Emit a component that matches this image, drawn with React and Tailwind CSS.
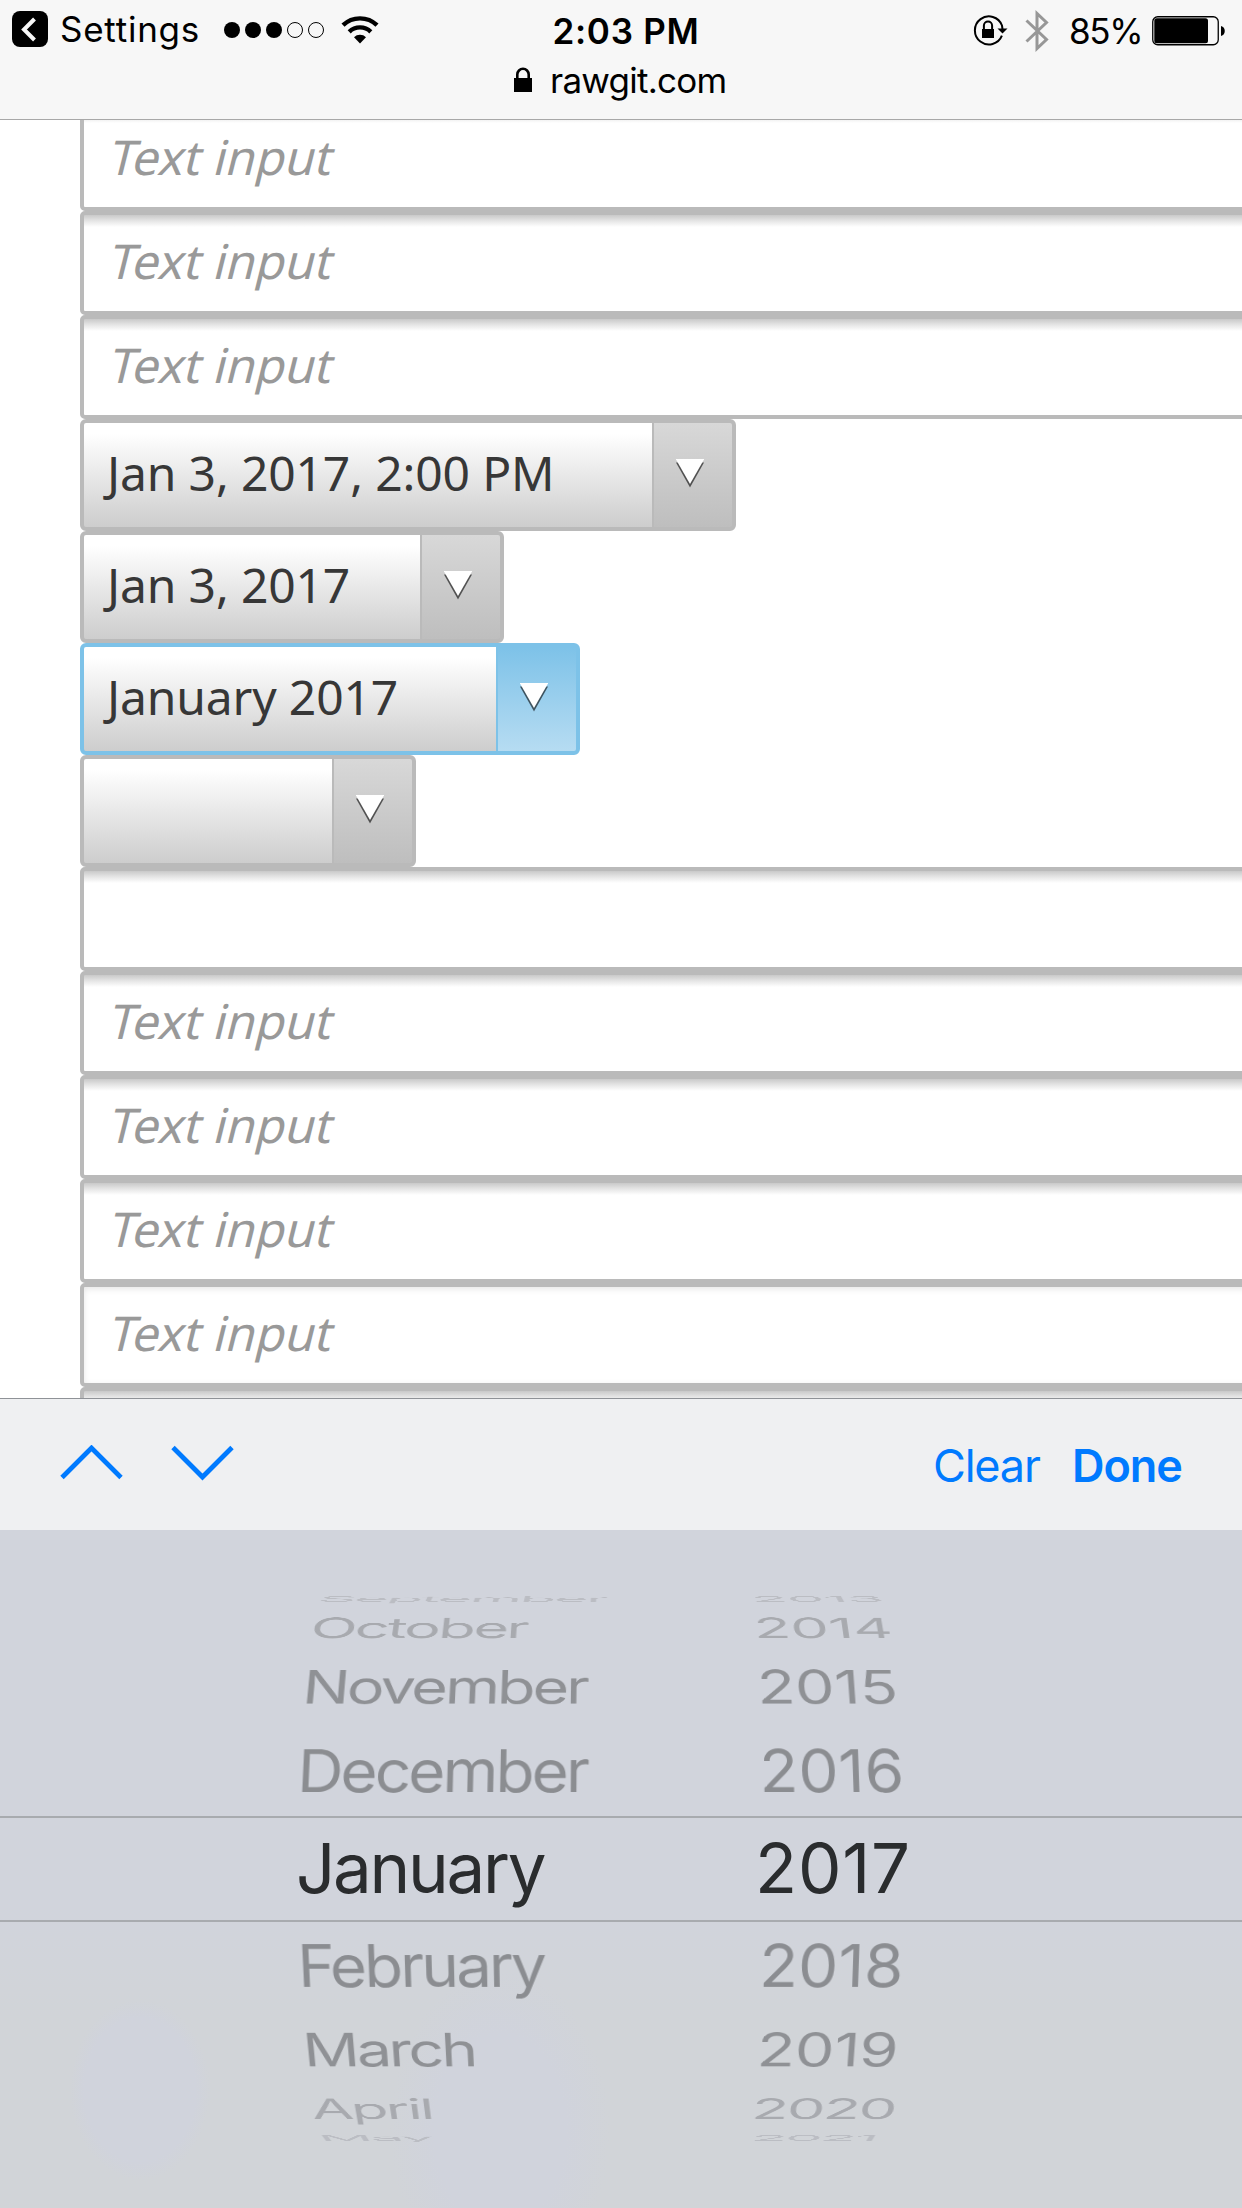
function TextInput({ placeholder, soft }) {
  return (
    <div
      className={
        "flex h-[104px] w-[1200px] shrink-0 items-center rounded-[5px] border-4 border-[#bababa] pl-6 font-['Noto_Sans','Open_Sans',sans-serif] text-[48px] leading-[64px] text-[#999] " +
        (soft
          ? "bg-white shadow-[inset_0_2px_6px_rgba(0,0,0,0.1)]"
          : "bg-[linear-gradient(to_bottom,#c9c9c9,#e6e6e6_6px,#fff_12px)]")
      }
    >
      <span className="-ml-[1px] -mt-[4px] inline-block origin-[0_49px] -skew-x-[14deg]">{placeholder}</span>
    </div>
  );
}

function Select({ label, width, active }) {
  return (
    <div
      className={
        "flex h-28 shrink-0 overflow-hidden rounded-[6px] border-4 " +
        width +
        (active ? " border-[#7dc2e8] bg-[#7dc2e8]" : " border-[#bababa] bg-[#bababa]")
      }
    >
      <div className="flex flex-1 items-center bg-linear-to-b from-white from-10% to-[#cdcdcd] pl-[23px] font-['Noto_Sans','Open_Sans',sans-serif] text-[48px] leading-[64px] tracking-[-0.15px] whitespace-nowrap text-[#373737]">
        <span className="-mt-[5px]">{label}</span>
      </div>
      <div
        className={
          "flex w-20 border-l-2 pt-9 pl-[22px] " +
          (active
            ? "border-[#7dc2e8] bg-linear-to-b from-[#7dc2e8] to-[#b6dcf2]"
            : "border-[#bababa] bg-linear-to-b from-[#d8d8d8] to-[#bebebe]")
        }
      >
        <svg width="28" height="29" viewBox="0 0 28 29">
          <path d="M0 3.5H28L14 28.5Z" fill="#000" fillOpacity="0.6" />
          <path d="M-0.3 0H28.3L14 25Z" fill="#fff" />
        </svg>
      </div>
    </div>
  );
}

const ROWS = [
  { m: "September", y: "2013", box: "h-[17px] text-[#bbbdc3] text-[64px] tracking-[-2.5px]", yc: "pl-[301px] tracking-[-0.8px]", t: "[transform:perspective(3000px)_translateZ(-225px)_rotateX(82.5deg)]" },
  { m: "October", y: "2014", box: "h-[41px] text-[#a8aaaf] text-[64px] tracking-[-2.6px]", yc: "pl-[300px] tracking-[-0.5px]", t: "[transform:perspective(3000px)_translateZ(-145px)_rotateX(63deg)]" },
  { m: "November", y: "2015", box: "h-[78px] text-[#8f9195] text-[64px] tracking-[-3px]", yc: "pl-[300px] tracking-[-0.2px]", t: "[transform:perspective(3000px)_translateZ(-65px)_rotateX(43deg)]" },
  { m: "December", y: "2016", box: "h-[90px] text-[#8b8d91] text-[64px] tracking-[-2.9px]", yc: "pl-[300px] tracking-[0.1px]", t: "[transform:perspective(3000px)_translateZ(-15px)_rotateX(24deg)]" },
  { m: "January", y: "2017", box: "h-[106px] text-[#2a2c2e] text-[69px] tracking-[-2.3px] border-y-2 border-[#a8abaf] pb-[2px]", yc: "pl-[295px] tracking-[0.8px]", t: "" },
  { m: "February", y: "2018", box: "h-[88px] text-[#8b8d91] text-[64px] tracking-[-2.9px]", yc: "pl-[300px] tracking-[0px]", t: "[transform:perspective(3000px)_translateZ(-15px)_rotateX(-24deg)]" },
  { m: "March", y: "2019", box: "h-[80px] text-[#8f9195] text-[64px] tracking-[-3.1px]", yc: "pl-[300px] tracking-[-0.2px]", t: "[transform:perspective(3000px)_translateZ(-65px)_rotateX(-43deg)]" },
  { m: "April", y: "2020", box: "h-[38px] text-[#a8aaaf] text-[64px] tracking-[-2.5px]", yc: "pl-[298px] tracking-[-2.1px]", t: "[transform:perspective(3000px)_translateZ(-145px)_rotateX(-63deg)]" },
  { m: "May", y: "2021", box: "h-[20px] text-[#bbbdc3] text-[64px] tracking-[-2.4px]", yc: "pl-[301px] tracking-[-2.5px]", t: "[transform:perspective(3000px)_translateZ(-225px)_rotateX(-82.5deg)]" },
];

function WheelRow({ row }) {
  return (
    <div className={"flex w-full shrink-0 items-center leading-[84px] " + row.box}>
      <div className={"flex h-[84px] w-full shrink-0 " + row.t}>
        <span className="w-[460px] shrink-0 pl-[296px]">{row.m}</span>
        <span className={row.yc}>{row.y}</span>
      </div>
    </div>
  );
}

function Header() {
  return (
    <header className="h-[120px] shrink-0 border-b border-[#a8a8a8] bg-[#f7f7f7] text-black">
      <div className="flex h-[62px] items-center">
        <div className="flex h-full w-[552.5px] items-center pl-3">
          <svg width="36" height="36" viewBox="0 0 36 36" className="-mt-1">
            <rect width="36" height="36" rx="8" />
            <path d="M22.5 8L12 18.5L22.5 29" fill="none" stroke="#f7f7f7" strokeWidth="4" />
          </svg>
          <span className="-mt-1 ml-[12px] w-[161px] text-[35px] leading-[60px] tracking-[0.75px]">Settings</span>
          <svg width="102" height="18" viewBox="0 0 102 18" className="-mt-[2px] ml-[2px]">
            <circle cx="9" cy="9" r="8" />
            <circle cx="30" cy="9" r="8" />
            <circle cx="51" cy="9" r="8" />
            <circle cx="72" cy="9" r="7.5" fill="none" stroke="#000" />
            <circle cx="93" cy="9" r="7.5" fill="none" stroke="#000" />
          </svg>
          <svg width="38" height="28" viewBox="0 0 38 28" className="-mt-[2px] ml-[16px]">
            <path d="M2 9.2A24.5 24.5 0 0 1 36 9.2" fill="none" stroke="#000" strokeWidth="4.4" />
            <path d="M8.2 15.8A15.5 15.5 0 0 1 29.8 15.8" fill="none" stroke="#000" strokeWidth="4.4" />
            <path d="M13 21.3A8.5 8.5 0 0 1 25 21.3L19 27.5Z" />
          </svg>
        </div>
        <span className="w-[420.5px] text-[35px] leading-[60px] font-semibold tracking-[0.02em]">2:03 PM</span>
        <svg width="36" height="32" viewBox="0 0 36 32" className="-mt-[2px]">
          <path d="M28.9 21.6A14 14 0 1 1 29 11.5L29.6 16" fill="none" stroke="#000" strokeWidth="2" />
          <path d="M24.5 14.5H34.5L29.5 19.5Z" />
          <rect x="9" y="15" width="12" height="9" />
          <path d="M10.9 15.5V11.5A4.1 4.1 0 0 1 19.1 11.5V15.5" fill="none" stroke="#000" strokeWidth="2" />
        </svg>
        <svg width="24" height="42" viewBox="0 0 24 42" className="ml-[16px]">
          <path d="M1.5 10.5L21.5 29.5L12 38.5V3.5L21.5 12.5L1.5 31.5" fill="none" stroke="#979797" strokeWidth="3" />
        </svg>
        <span className="ml-[20px] w-[83px] text-[35px] leading-[60px] tracking-[-1.3px]">85%</span>
        <svg width="75" height="30" viewBox="0 0 75 30">
          <rect x="0.75" y="0.75" width="65.5" height="28" rx="5" fill="none" stroke="#000" strokeWidth="1.3" />
          <rect x="2.3" y="2.2" width="53.7" height="25" rx="2.5" />
          <path d="M69 10C74 11 74 19 69 20Z" />
        </svg>
      </div>
      <div className="flex h-[40px] pl-[514px]">
        <svg width="18" height="26" viewBox="0 0 18 26" className="mt-[5px]">
          <rect x="0" y="11" width="18" height="14" />
          <path d="M3.3 12V7.5A5.7 5.7 0 0 1 14.7 7.5V12" fill="none" stroke="#000" strokeWidth="2.6" />
        </svg>
        <span className="-mt-[12px] ml-[18px] text-[35px] leading-[60px] tracking-[-0.75px]">rawgit.com</span>
      </div>
    </header>
  );
}

function Toolbar() {
  return (
    <div className="flex h-[132px] shrink-0 items-center border-t border-[#8f9297] bg-[#eff0f2] text-[45px] leading-[60px] text-[#007aff]">
      <svg width="64" height="36" viewBox="0 0 64 36" className="-mt-[3px] ml-[60px] shrink-0">
        <path d="M2 32.5L31.5 3L61 32.5" fill="none" stroke="#007aff" strokeWidth="4.8" />
      </svg>
      <svg width="64" height="36" viewBox="0 0 64 36" className="-mt-[3px] ml-[47px] shrink-0">
        <path d="M2 2.5L31.5 32L61 2.5" fill="none" stroke="#007aff" strokeWidth="4.8" />
      </svg>
      <span className="mt-[3px] ml-[698px] w-[139px] shrink-0 tracking-[-1.2px]">Clear</span>
      <span className="mt-[3px] font-semibold tracking-[-1.1px]">Done</span>
    </div>
  );
}

export default function App() {
  return (
    <div className="flex h-[2208px] w-[1242px] flex-col overflow-hidden bg-white font-['Inter','Liberation_Sans',sans-serif]">
      <Header />
      <main className="flex h-[1278px] shrink-0 flex-col overflow-hidden pl-20">
        <div className="-mt-[13px] flex flex-col">
          <TextInput placeholder="Text input" />
          <TextInput placeholder="Text input" />
          <TextInput placeholder="Text input" />
          <Select label="Jan 3, 2017, 2:00 PM" width="w-[656px]" />
          <Select label="Jan 3, 2017" width="w-[424px]" />
          <Select label="January 2017" width="w-[500px]" active />
          <Select label="" width="w-[336px]" />
          <TextInput placeholder="" />
          <TextInput placeholder="Text input" />
          <TextInput placeholder="Text input" />
          <TextInput placeholder="Text input" />
          <TextInput placeholder="Text input" soft />
          <TextInput placeholder="" />
        </div>
      </main>
      <Toolbar />
      <div className="flex flex-1 flex-col bg-[radial-gradient(ellipse_70px_90px_at_140px_560px,#d0d3dc_80%,transparent),radial-gradient(ellipse_110px_160px_at_500px_600px,#d0d3dc_60%,transparent),linear-gradient(to_bottom,#d1d4dc_56%,#d1d4d8_72%)] pt-[60px]">
        {ROWS.map((row) => (
          <WheelRow key={row.m} row={row} />
        ))}
      </div>
    </div>
  );
}
